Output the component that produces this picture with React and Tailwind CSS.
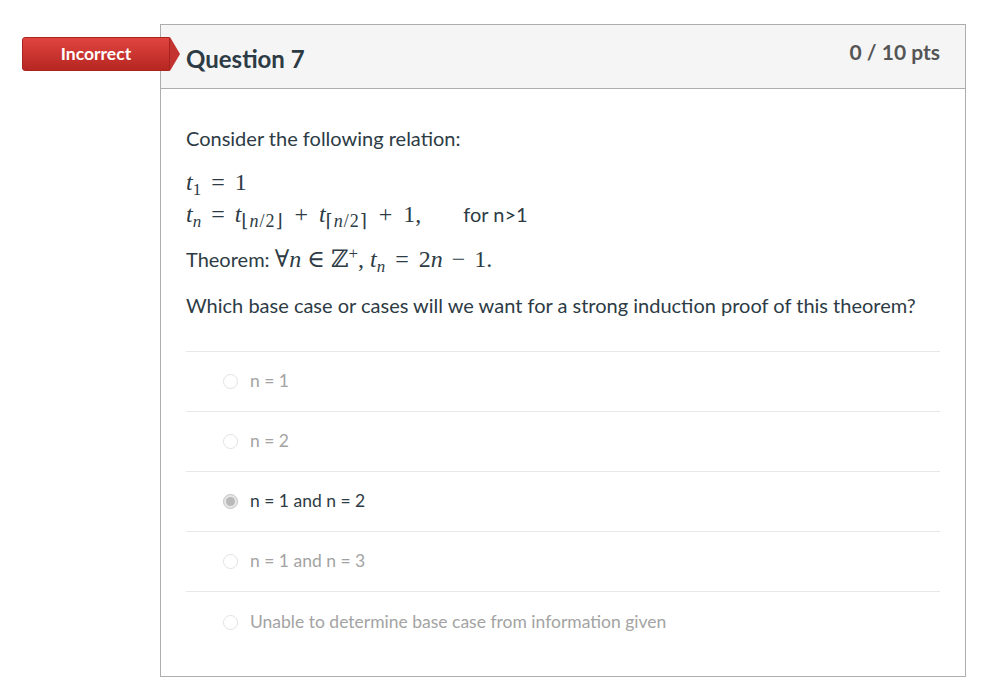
import React from 'react'

const answers = [
  { label: 'n = 1', selected: false },
  { label: 'n = 2', selected: false },
  { label: 'n = 1 and n = 2', selected: true },
  { label: 'n = 1 and n = 3', selected: false },
  { label: 'Unable to determine base case from information given', selected: false },
]

const mathFont = { fontFamily: '"Liberation Serif", "DejaVu Serif", serif' }

function Radio({ selected }) {
  if (selected) {
    return (
      <span className="flex h-[15px] w-[15px] items-center justify-center rounded-full border border-[#c4c4c4] bg-[#e6e6e6]">
        <span className="h-[9px] w-[9px] rounded-full bg-[#b9b9b9]" />
      </span>
    )
  }
  return <span className="h-[15px] w-[15px] rounded-full border border-[#e2e2e2] bg-white" />
}

function M({ children }) {
  return (
    <span style={mathFont} className="text-[24px] leading-none">
      {children}
    </span>
  )
}

function Sub({ children, wide }) {
  return (
    <span className={`align-[-5px] leading-none ${wide ? 'text-[18px] tracking-[1px]' : 'text-[17px]'}`}>
      {children}
    </span>
  )
}

export default function App() {
  return (
    <div className="min-h-screen bg-white pt-6 text-[#2d3b45]" style={{ fontFamily: 'Lato, "Noto Sans", sans-serif' }}>
      <div className="relative ml-[160px] w-[806px] border border-[#adadad]">
        <div className="absolute left-[-139px] top-[12px] flex h-[34px] items-center">
          <div className="flex h-[34px] w-[148px] items-center justify-center rounded-l-[3px] border border-[#a9231f] bg-gradient-to-b from-[#e0443f] to-[#b62622] text-[17.5px] font-bold text-white">
            Incorrect
          </div>
          <div className="h-0 w-0 border-y-[17px] border-l-[10px] border-y-transparent border-l-[#c33430]" />
        </div>

        <div className="flex h-[64px] items-start justify-between border-b border-[#adadad] bg-[#f5f5f5] pl-[25px] pr-[25px]">
          <h2 className="mt-[19px] text-[24px] font-bold leading-[30px] text-[#2d3b45]">Question 7</h2>
          <div className="mt-[12px] text-[21px] font-bold leading-[30px] text-[#555555]">0 / 10 pts</div>
        </div>

        <div className="px-[25px] pb-[24px] pt-[34px]">
          <p className="text-[20px] leading-[30px]">Consider the following relation:</p>

          <div className="mt-[15px] leading-[31px]">
            <div className="h-[31px]">
              <M>
                <i>t</i>
                <Sub>1</Sub>
                <span className="mx-[10px]">=</span>1
              </M>
            </div>
            <div className="flex h-[31px] items-baseline">
              <M>
                <i>t</i>
                <Sub><i>n</i></Sub>
                <span className="mx-[10px]">=</span>
                <i>t</i>
                <Sub wide>⌊<i>n</i>/2⌋</Sub>
                <span className="mx-[11px]">+</span>
                <i>t</i>
                <Sub wide>⌈<i>n</i>/2⌉</Sub>
                <span className="mx-[11px]">+</span>1,
              </M>
              <span className="ml-[42px] text-[20px]">for n&gt;1</span>
            </div>
          </div>

          <p className="mt-[14px] text-[20px] leading-[30px]">
            Theorem: <M>∀<i>n</i> ∈ ℤ<span className="align-[8px] text-[17px] leading-none">+</span>, <i>t</i><Sub><i>n</i></Sub><span className="mx-[10px]">=</span>2<i>n</i><span className="mx-[9px]">−</span>1.</M>
          </p>

          <p className="mt-[15px] text-[20px] leading-[30px]">
            Which base case or cases will we want for a strong induction proof of this theorem?
          </p>

          <div className="mt-[31px] border-t border-[#e8e8e8]">
            {answers.map((a, i) => (
              <div
                key={a.label}
                className={`flex h-[60px] items-center gap-[12px] pl-[37px] ${i < answers.length - 1 ? 'border-b border-[#e8e8e8]' : ''}`}
              >
                <Radio selected={a.selected} />
                <span className={`text-[17.5px] ${a.selected ? 'text-[#2d3b45]' : 'text-[#a3a3a3]'}`}>{a.label}</span>
              </div>
            ))}
          </div>
        </div>
      </div>
    </div>
  )
}
